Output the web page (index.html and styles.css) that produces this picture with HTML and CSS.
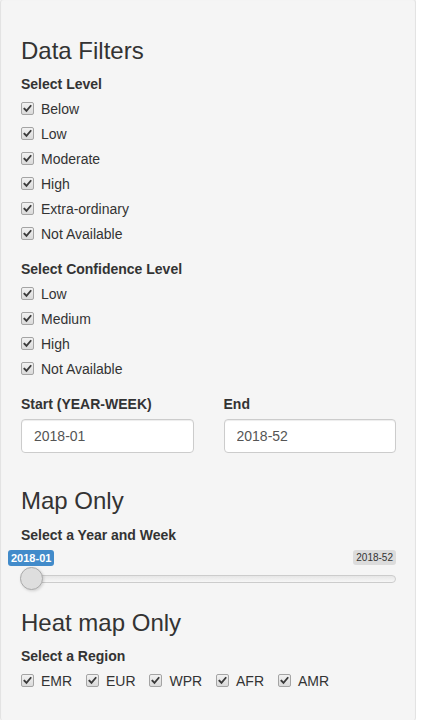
FILE: index.html
```html
<!DOCTYPE html>
<html>
<head>
<meta charset="utf-8">
<link rel="stylesheet" href="styles.css">
</head>
<body>
<div class="well">
  <h3>Data Filters</h3>
  <div class="form-group">
    <label class="control-label">Select Level</label>
    <div class="options">
      <div class="checkbox"><label><span class="box"><svg viewBox="0 0 12 12"><path d="M2.6 6.2 L4.9 8.6 L9.4 3.2" /></svg></span><span>Below</span></label></div>
      <div class="checkbox"><label><span class="box"><svg viewBox="0 0 12 12"><path d="M2.6 6.2 L4.9 8.6 L9.4 3.2" /></svg></span><span>Low</span></label></div>
      <div class="checkbox"><label><span class="box"><svg viewBox="0 0 12 12"><path d="M2.6 6.2 L4.9 8.6 L9.4 3.2" /></svg></span><span>Moderate</span></label></div>
      <div class="checkbox"><label><span class="box"><svg viewBox="0 0 12 12"><path d="M2.6 6.2 L4.9 8.6 L9.4 3.2" /></svg></span><span>High</span></label></div>
      <div class="checkbox"><label><span class="box"><svg viewBox="0 0 12 12"><path d="M2.6 6.2 L4.9 8.6 L9.4 3.2" /></svg></span><span>Extra-ordinary</span></label></div>
      <div class="checkbox"><label><span class="box"><svg viewBox="0 0 12 12"><path d="M2.6 6.2 L4.9 8.6 L9.4 3.2" /></svg></span><span>Not Available</span></label></div>
    </div>
  </div>
  <div class="form-group">
    <label class="control-label">Select Confidence Level</label>
    <div class="options">
      <div class="checkbox"><label><span class="box"><svg viewBox="0 0 12 12"><path d="M2.6 6.2 L4.9 8.6 L9.4 3.2" /></svg></span><span>Low</span></label></div>
      <div class="checkbox"><label><span class="box"><svg viewBox="0 0 12 12"><path d="M2.6 6.2 L4.9 8.6 L9.4 3.2" /></svg></span><span>Medium</span></label></div>
      <div class="checkbox"><label><span class="box"><svg viewBox="0 0 12 12"><path d="M2.6 6.2 L4.9 8.6 L9.4 3.2" /></svg></span><span>High</span></label></div>
      <div class="checkbox"><label><span class="box"><svg viewBox="0 0 12 12"><path d="M2.6 6.2 L4.9 8.6 L9.4 3.2" /></svg></span><span>Not Available</span></label></div>
    </div>
  </div>
  <div class="row">
    <div class="col">
      <div class="form-group">
        <label class="control-label">Start (YEAR-WEEK)</label>
        <input class="form-control" type="text" value="2018-01">
      </div>
    </div>
    <div class="col">
      <div class="form-group">
        <label class="control-label">End</label>
        <input class="form-control" type="text" value="2018-52">
      </div>
    </div>
  </div>
  <h3>Map Only</h3>
  <div class="form-group">
    <label class="control-label">Select a Year and Week</label>
    <div class="irs">
      <span class="irs-line"></span>
      <span class="irs-max">2018-52</span>
      <span class="irs-single">2018-01</span>
      <span class="irs-handle"></span>
    </div>
  </div>
  <h3>Heat map Only</h3>
  <div class="form-group">
    <label class="control-label">Select a Region</label>
    <div class="options">
      <label class="checkbox-inline"><span class="box"><svg viewBox="0 0 12 12"><path d="M2.6 6.2 L4.9 8.6 L9.4 3.2" /></svg></span><span>EMR</span></label>
      <label class="checkbox-inline"><span class="box"><svg viewBox="0 0 12 12"><path d="M2.6 6.2 L4.9 8.6 L9.4 3.2" /></svg></span><span>EUR</span></label>
      <label class="checkbox-inline"><span class="box"><svg viewBox="0 0 12 12"><path d="M2.6 6.2 L4.9 8.6 L9.4 3.2" /></svg></span><span>WPR</span></label>
      <label class="checkbox-inline"><span class="box"><svg viewBox="0 0 12 12"><path d="M2.6 6.2 L4.9 8.6 L9.4 3.2" /></svg></span><span>AFR</span></label>
      <label class="checkbox-inline"><span class="box"><svg viewBox="0 0 12 12"><path d="M2.6 6.2 L4.9 8.6 L9.4 3.2" /></svg></span><span>AMR</span></label>
    </div>
  </div>
</div>
</body>
</html>
```

FILE: styles.css
```css
* { box-sizing: border-box; }
html, body { margin: 0; padding: 0; background: #fff; }
body {
  font-family: "Liberation Sans", Arial, Helvetica, sans-serif;
  font-size: 14px;
  line-height: 1.42857143;
  color: #333;
  height: 720px;
  overflow: hidden;
}
.well {
  width: 416px;
  height: 724px;
  margin-top: -2px;
  padding: 19px 19px 0 20px;
  background-color: #f5f5f5;
  border: 1px solid #e3e3e3;
  border-radius: 4px;
  box-shadow: inset 0 1px 1px rgba(0,0,0,.05);
  overflow: hidden;
}
h3 {
  font-family: inherit;
  font-weight: 500;
  font-size: 24px;
  line-height: 1.1;
  margin: 20px 0 10px;
  color: #333;
}
.form-group { margin-bottom: 15px; }
.control-label {
  display: inline-block;
  max-width: 100%;
  margin-bottom: 5px;
  font-weight: 700;
}
.options { display: block; }
.checkbox {
  position: relative;
  display: block;
  margin: 10px 0;
}
.options .checkbox:first-child { margin-top: 0; }
.checkbox + .checkbox { margin-top: -5px; }
.checkbox label {
  position: relative;
  display: block;
  min-height: 20px;
  padding-left: 20px;
  font-weight: 400;
  cursor: pointer;
}
.checkbox-inline {
  position: relative;
  display: inline-block;
  padding-left: 20px;
  margin-bottom: 0;
  font-weight: 400;
  vertical-align: top;
  cursor: pointer;
  min-height: 20px;
}
.checkbox-inline + .checkbox-inline { margin-left: 10px; }
.box {
  position: absolute;
  left: 0;
  top: 3px;
  width: 13px;
  height: 13px;
  border: 1px solid #a4a4a4;
  border-radius: 2px;
  background: linear-gradient(#f2f2f2, #dadada);
}
.box svg {
  display: block;
  width: 11px;
  height: 11px;
}
.box path {
  fill: none;
  stroke: #3a3a3a;
  stroke-width: 2;
  stroke-linecap: square;
}
.row {
  display: flex;
  margin: 0 -15px;
}
.col {
  width: 50%;
  padding: 0 15px;
}
.form-control {
  display: block;
  width: 100%;
  height: 34px;
  padding: 6px 12px;
  font-family: inherit;
  font-size: 14px;
  line-height: 1.42857143;
  color: #555;
  background-color: #fff;
  border: 1px solid #ccc;
  border-radius: 4px;
  box-shadow: inset 0 1px 1px rgba(0,0,0,.075);
  margin: 0;
}
.irs {
  position: relative;
  display: block;
  height: 40px;
  margin-left: -1px;
  font-family: "Liberation Sans", Arial, sans-serif;
}
.irs-line {
  position: absolute;
  left: 0;
  right: 0;
  top: 25px;
  height: 8px;
  border: 1px solid #ccc;
  border-radius: 8px;
  background: linear-gradient(to bottom, #dedede -50%, #fff 150%);
}
.irs-handle {
  position: absolute;
  left: 0;
  top: 17px;
  width: 23px;
  height: 23px;
  border: 1px solid #ababab;
  border-radius: 50%;
  background-color: #dedede;
  box-shadow: 1px 1px 3px rgba(0,0,0,.15);
}
.irs-max {
  position: absolute;
  right: 0;
  top: 0;
  padding: 1px 3px;
  font-size: 10px;
  line-height: 1.333;
  color: #333;
  background-color: rgba(0,0,0,.1);
  border-radius: 3px;
}
.irs-single {
  position: absolute;
  left: -12px;
  top: 0;
  padding: 1px 3px;
  font-size: 11px;
  font-weight: 700;
  line-height: 1.333;
  color: #fff;
  background-color: #428bca;
  border-radius: 3px;
}
```
